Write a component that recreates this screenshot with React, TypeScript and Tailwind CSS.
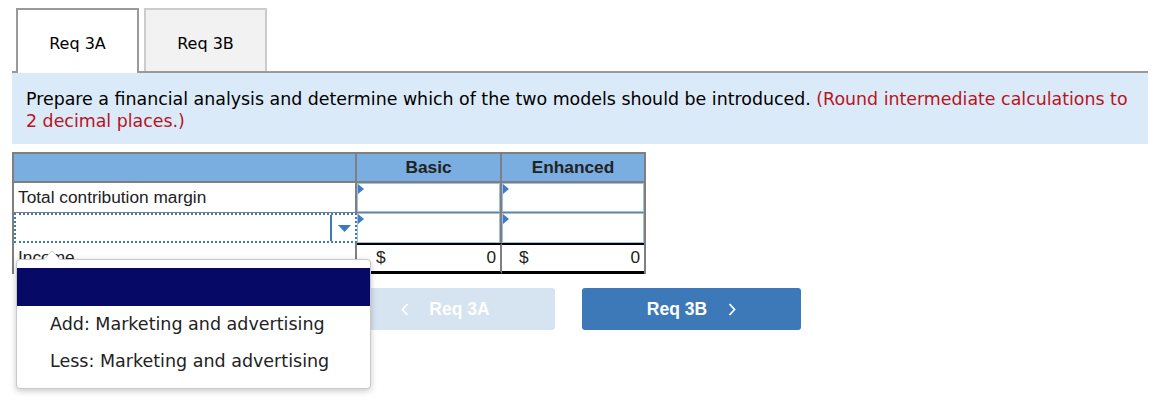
import React from "react";

const verdana = "font-['DejaVu_Sans',Verdana,sans-serif]";
const arial = "font-['Liberation_Sans',Arial,sans-serif]";

function InputCell({ last }: { last?: boolean }) {
  return (
    <div
      className={`relative h-full ${last ? "w-[142px]" : "w-[145px] border-r-2 border-[#7f7f7f]"} bg-white`}
    >
      <div className="absolute inset-0 border border-[#9dbfe6]" />
      <svg className="absolute left-[1px] top-[1px]" width="6" height="10" viewBox="0 0 6 10">
        <path d="M0 0 L6 5 L0 10 Z" fill="#3f7cc4" />
      </svg>
    </div>
  );
}

function Chevron({ dir }: { dir: "left" | "right" }) {
  return (
    <svg width="8" height="13" viewBox="0 0 8 13" fill="none">
      <path
        d={dir === "left" ? "M6.5 1 L1.5 6.5 L6.5 12" : "M1.5 1 L6.5 6.5 L1.5 12"}
        stroke="white"
        strokeWidth="1.8"
      />
    </svg>
  );
}

export default function App() {
  return (
    <div className={`relative w-[1158px] h-[406px] bg-white text-[#222] ${verdana}`}>
      {/* Tabs */}
      <div className="pt-[8px]">
        <div className="ml-[12px] w-[1136px] h-[65px] flex items-end gap-[5px] pl-[4px] border-b-2 border-[#9a9a9a]">
          <div className="-mb-[2px] h-[65px] w-[123px] border-2 border-b-0 border-[#9a9a9a] bg-white flex items-center justify-center pt-[4px] text-[16px] text-black">
            Req 3A
          </div>
          <div className="h-[63px] w-[123px] border-2 border-b-0 border-[#cccccc] bg-[#f2f2f2] flex items-center justify-center pt-[6px] text-[16px] text-black">
            Req 3B
          </div>
        </div>
      </div>

      {/* Instruction box */}
      <div className="ml-[12px] w-[1136px] bg-[#dbeaf8] px-[14px] pt-[15px] pb-[12px] text-[17.4px] leading-[22px] text-black">
        Prepare a financial analysis and determine which of the two models should be introduced.{" "}
        <span className="text-[#b8141e]">(Round intermediate calculations to 2 decimal places.)</span>
      </div>

      {/* Table */}
      <div className={`ml-[12px] mt-[8px] w-[634px] ${arial} text-[17.3px] text-[#222]`}>
        <div className="border-x-2 border-t-2 border-[#7f7f7f]">
          {/* header */}
          <div className="flex h-[29px] bg-[#7aade0] border-b-2 border-[#7f7f7f]">
            <div className="w-[343px] border-r-2 border-[#7f7f7f]" />
            <div className="w-[145px] border-r-2 border-[#7f7f7f] flex items-center justify-center font-bold">
              Basic
            </div>
            <div className="w-[142px] flex items-center justify-center font-bold">Enhanced</div>
          </div>
          {/* row 1 */}
          <div className="flex h-[30px] border-b border-[#7f7f7f]">
            <div className="w-[343px] border-r-2 border-[#7f7f7f] flex items-center pl-[4px]">
              Total contribution margin
            </div>
            <InputCell />
            <InputCell last />
          </div>
          {/* row 2 */}
          <div className="flex h-[30px]">
            <div className="relative w-[343px] border-2 border-dotted border-[#3d78c0] bg-white flex items-stretch justify-end">
              <div className="w-[2px] bg-[#3d78c0] mr-[23px]" />
              <svg className="absolute right-[4px] top-[10px]" width="13" height="7" viewBox="0 0 13 7">
                <path d="M0 0 L13 0 L6.5 7 Z" fill="#3d78c0" />
              </svg>
            </div>
            <InputCell />
            <InputCell last />
          </div>
          {/* row 3 */}
          <div className="flex h-[31px]">
            <div className="w-[343px] border-r-2 border-[#7f7f7f] flex items-center pl-[4px] pb-[2px]">
              Income
            </div>
            <div className="w-[145px] border-r-2 border-[#7f7f7f] border-t-2 border-t-black border-b-[3px] border-b-black flex items-center justify-between pl-[19px] pr-[4px]">
              <span>$</span>
              <span>0</span>
            </div>
            <div className="w-[142px] border-t-2 border-t-black border-b-[3px] border-b-black flex items-center justify-between pl-[17px] pr-[4px]">
              <span>$</span>
              <span>0</span>
            </div>
          </div>
        </div>
      </div>

      {/* Buttons */}
      <div className={`mt-[14px] ml-[336px] flex gap-[27px] ${arial} font-bold text-[17.5px] text-white`}>
        <div className="w-[219px] h-[42px] shrink-0 rounded-[3px] bg-[#d6e3f1] flex items-center justify-center gap-[20px]">
          <Chevron dir="left" />
          <span>Req 3A</span>
        </div>
        <div className="w-[219px] h-[42px] shrink-0 rounded-[3px] bg-[#3d78b8] flex items-center justify-center gap-[21px]">
          <span>Req 3B</span>
          <Chevron dir="right" />
        </div>
      </div>

      {/* Dropdown popup */}
      <div className="absolute left-[16px] top-[259px] w-[355px] h-[130px] rounded-[4px] border border-[#c8c8c8] bg-white shadow-[0_2px_6px_rgba(0,0,0,0.22)] pt-[8px]">
        <svg className="absolute left-[26px] -top-[10px]" width="18" height="11" viewBox="0 0 18 11">
          <path d="M0 10.5 L9 0.8 L18 10.5" fill="white" stroke="#c8c8c8" strokeWidth="1" />
          <rect x="0" y="10" width="18" height="2" fill="white" />
        </svg>
        <div className="h-[38px] bg-[#060a66]" />
        <div className="pl-[33px] text-[17.5px] text-[#222]">
          <div className="h-[37px] flex items-center">Add: Marketing and advertising</div>
          <div className="h-[37px] flex items-center">Less: Marketing and advertising</div>
        </div>
      </div>
    </div>
  );
}
